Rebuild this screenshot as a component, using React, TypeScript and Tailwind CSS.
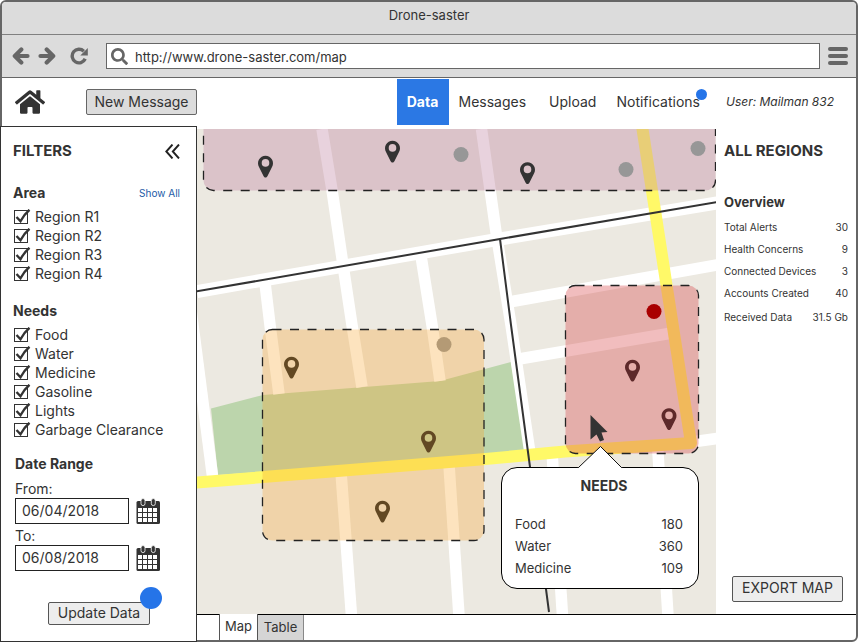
import type { ReactNode } from "react";
import { FaHome, FaSearch } from "react-icons/fa";

const AREAS = ["Region R1", "Region R2", "Region R3", "Region R4"];
const NEEDS = ["Food", "Water", "Medicine", "Gasoline", "Lights", "Garbage Clearance"];
const OVERVIEW = [
  ["Total Alerts", "30"],
  ["Health Concerns", "9"],
  ["Connected Devices", "3"],
  ["Accounts Created", "40"],
  ["Received Data", "31.5 Gb"],
];
const REGION_NEEDS = [
  ["Food", "180"],
  ["Water", "360"],
  ["Medicine", "109"],
];

function ArrowIcon({ className }: { className: string }) {
  return (
    <svg viewBox="0 0 18 18" className={className} fill="none" stroke="currentColor" strokeWidth="4.200">
      <path d="M9.300 2.500 L2.800 9 L9.300 15.500" strokeLinejoin="round" strokeLinecap="round" />
      <path d="M4 9 H15.500" strokeLinecap="round" />
    </svg>
  );
}

function ReloadIcon() {
  return (
    <svg viewBox="0 0 18 18" className="size-[18px]" fill="none" stroke="currentColor" strokeWidth="3.400">
      <path d="M13.800 4.200 A6.800 6.800 0 1 0 15.200 11.800" />
      <path d="M17.800 1 V8.500 H10.300Z" fill="currentColor" stroke="none" />
    </svg>
  );
}

function CheckRow({ label }: { label: string }) {
  return (
    <label className="flex h-[19px] items-center text-sm">
      <span className="relative mr-[5px] block h-[15px] w-4">
        <input
          type="checkbox"
          defaultChecked
          className="peer mt-px block size-3.5 appearance-none border border-[#333] bg-white"
        />
        <svg
          viewBox="0 0 17 15"
          className="pointer-events-none absolute top-0 left-0 hidden h-[15px] w-[17px] peer-checked:block"
          fill="none"
          stroke="#333"
          strokeWidth="2.400"
        >
          <path d="M2.500 8 L6.500 12.300 Q10 5.500 15.500 0.800" />
        </svg>
      </span>
      {label}
    </label>
  );
}

function CheckGroup({ items }: { items: string[] }) {
  return (
    <div className="mt-1">
      {items.map((item) => (
        <CheckRow key={item} label={item} />
      ))}
    </div>
  );
}

function CalendarIcon() {
  return (
    <svg viewBox="0 0 24 26" className="h-[26px] w-6">
      <rect x="0.500" y="3" width="23.500" height="23" rx="1.500" fill="#333" />
      <g stroke="#fff" strokeDasharray="4 1">
        <path d="M2 12 H22" strokeWidth="4" />
        <path d="M2 17 H22" strokeWidth="4" />
        <path d="M2 22 H22" strokeWidth="4" />
      </g>
      <g fill="#333" stroke="#fff" strokeWidth="0.800">
        <rect x="5" y="0.600" width="4" height="7" rx="2" />
        <rect x="15.300" y="0.600" width="4" height="7" rx="2" />
      </g>
    </svg>
  );
}

function DateField({ id, label, value }: { id: string; label: string; value: string }) {
  return (
    <div className="text-sm">
      <label htmlFor={id} className="block h-[21px] leading-[23px]">
        {label}
      </label>
      <div className="flex items-center gap-[7px]">
        <input
          id={id}
          defaultValue={value}
          className="h-[26px] w-[114px] border border-[#222] bg-white px-1.5 pb-0.5"
        />
        <button type="button" aria-label={`Pick date: ${label}`}>
          <CalendarIcon />
        </button>
      </div>
    </div>
  );
}

function Filters() {
  return (
    <aside className="relative -mb-0.5 -ml-0.5 w-[197px] shrink-0 border border-[#333] bg-white px-[13px]">
      <div className="mt-3.5 flex h-5 items-center justify-between pr-[3px]">
        <h2 className="-ml-px text-[15px] font-bold">FILTERS</h2>
        <button type="button" aria-label="Collapse filters">
          <svg viewBox="0 0 15 15" className="size-[15px]" fill="none" stroke="#222" strokeWidth="1.900">
            <path d="M7.500 0.500 L1.300 7.500 L7.500 14.500 M14 0.500 L7.800 7.500 L14 14.500" />
          </svg>
        </button>
      </div>

      <div className="mt-[22px] flex h-5 items-center justify-between pr-[3px]">
        <h3 className="-ml-px text-sm font-bold">Area</h3>
        <a href="#all" className="text-[10px] text-[#1d5ba6]">
          Show All
        </a>
      </div>
      <CheckGroup items={AREAS} />

      <h3 className="mt-[18px] -ml-px h-5 text-sm leading-5 font-bold">Needs</h3>
      <CheckGroup items={NEEDS} />

      <div className="pl-px">
        <h3 className="mt-[15px] h-5 text-sm leading-5 font-bold">Date Range</h3>
        <div className="mt-[3px]">
          <DateField id="from" label="From:" value="06/04/2018" />
          <DateField id="to" label="To:" value="06/08/2018" />
        </div>
      </div>

      <div className="relative mt-[29px] mb-4 ml-[34px] w-[102px]">
        <button
          type="button"
          className="h-[23px] w-full rounded-xs border border-[#555] bg-[#ededed] pb-1 text-sm leading-5"
        >
          Update Data
        </button>
        <span className="absolute -top-[13px] -right-3 size-[22px] rounded-full bg-[#2574e8]" />
      </div>
    </aside>
  );
}

function Pin({ x, y, fill = "#333" }: { x: number; y: number; fill?: string }) {
  return (
    <path
      transform={`translate(${x} ${y})`}
      fill={fill}
      fillRule="evenodd"
      d="M0 0 C-1 0 -1.700 -0.800 -2 -1.600 L-6.500 -10.500 A7.500 7.500 0 1 1 6.500 -10.500 L2 -1.600 C1.700 -0.800 1 0 0 0Z M0 -18.400 A3.800 3.800 0 1 0 0 -10.800 A3.800 3.800 0 1 0 0 -18.400Z"
    />
  );
}

function Region({ children, ...box }: {
  x: number;
  y: number;
  width: number;
  height: number;
  fill: string;
  fillOpacity: number;
  children?: ReactNode;
}) {
  return (
    <>
      {children}
      <rect {...box} rx="10" stroke="#222" strokeWidth="1.300" strokeDasharray="9 8.500" />
    </>
  );
}

function CityMap() {
  return (
    <svg
      viewBox="197 129 519 485"
      preserveAspectRatio="xMinYMin slice"
      className="absolute inset-0 h-full w-full"
      role="img"
      aria-label="Map of regions"
    >
      <rect x="197" y="129" width="519" height="486" fill="#ece9e1" />
      <path d="M211 408.500 L263 395 L440 381 L511 362 L526 453 L218 475Z" fill="#bcd5ac" />
      <g fill="none" stroke="#fff" strokeWidth="11.500">
        <path d="M197 291.500 L500 239 L717 203" strokeWidth="13" />
        <path d="M322 129 L332 190 L343 265 L352 325 L362 387" />
        <path d="M265 283 L270 325 L279 394" />
        <path d="M421 256 L432 325 L440 381" />
        <path d="M191 310 L213 480" />
        <path d="M481.500 129 L496 232 L511 325 L530 453" />
        <path d="M341 472 L351.500 616" />
        <path d="M449 465 L459 616" />
        <path d="M552 452 L562.500 616" />
        <path d="M657.500 445 L668 616" />
        <path d="M512 301.500 L717 265" />
        <path d="M519 359 L672 333" />
        <path d="M692 442 L717 438.500" />
      </g>
      <path
        d="M190 483 L480 459.500 L565 451.500 L691 443 L666.500 285 L642.500 129 L640 115"
        fill="none"
        stroke="#fff968"
        strokeWidth="12"
        strokeLinejoin="round"
      />
      <path
        d="M196 291.500 L500 239 L717 202 M500 239 L511 325 L530 467 L549 612"
        fill="none"
        stroke="#333"
        strokeWidth="2"
      />

      <Region x={203.500} y={117} width={512} height={73.500} fill="#b97697" fillOpacity={0.33} />
      <g fill="#979797">
        <circle cx="461" cy="154.500" r="7.500" />
        <circle cx="626" cy="169.500" r="7.500" />
        <circle cx="698" cy="148.500" r="7.500" />
      </g>
      <Pin x={265.500} y={177.500} />
      <Pin x={392.500} y={162.500} />
      <Pin x={527.500} y={184} />

      <Region x={262.500} y={329.500} width={221.500} height={211} fill="#faa328" fillOpacity={0.3}>
        <circle cx="444" cy="344.500" r="7.500" fill="#979797" />
        <Pin x={291.500} y={378.500} fill="#222" />
        <Pin x={428.500} y={452.500} fill="#222" />
        <Pin x={382.500} y={522.500} fill="#222" />
      </Region>

      <Region x={565.500} y={285.500} width={133} height={168} fill="#d64146" fillOpacity={0.35}>
        <Pin x={632.500} y={381.500} fill="#1c1c1c" />
        <Pin x={669} y={430} fill="#1c1c1c" />
      </Region>
      <circle cx="654" cy="311.500" r="7.500" fill="#a90000" />
      <path d="M590.500 415 L590.500 439.500 L596.500 434.500 L600 441.500 L604 440 L601.500 432.500 L607.500 432Z" fill="#333" />
    </svg>
  );
}

function NeedsPopup() {
  return (
    <div className="absolute top-[338px] left-[304px] w-[198px] rounded-2xl border border-black bg-white px-[13px] pt-2 pb-[9px]">
      <svg viewBox="0 0 46 24" className="absolute -top-[23px] left-[75px] h-6 w-[46px]">
        <path d="M1 23 L23.500 1.500 L45 23 V24 H1Z" fill="#fff" />
        <path d="M0 22.500 H1.500 L23.500 1.500 L44.500 22.500 H46" fill="none" stroke="#111" />
      </svg>
      <h3 className="h-5 pl-2 text-center text-sm leading-5 font-bold">NEEDS</h3>
      <table className="mt-[17px] w-full text-[13px]">
        <tbody>
          {REGION_NEEDS.map(([name, count]) => (
            <tr key={name} className="h-[22px]">
              <th scope="row" className="p-0 text-left leading-5 font-normal">
                {name}
              </th>
              <td className="p-0 pr-0.5 text-right leading-5">{count}</td>
            </tr>
          ))}
        </tbody>
      </table>
    </div>
  );
}

function Overview() {
  return (
    <aside className="flex w-[140px] shrink-0 flex-col pl-2">
      <h2 className="mt-3 h-5 text-[15px] leading-5 font-bold whitespace-nowrap">ALL REGIONS</h2>
      <h3 className="mt-[31px] h-5 text-[13px] leading-5 font-bold">Overview</h3>
      <dl className="mt-1 pr-2 text-[10px] whitespace-nowrap">
        {OVERVIEW.map(([name, value]) => (
          <div key={name} className="flex h-[22px] items-center justify-between last:h-[26px]">
            <dt>{name}</dt>
            <dd>{value}</dd>
          </div>
        ))}
      </dl>
      <button
        type="button"
        className="mt-auto mb-3 ml-2 h-[26px] w-[111px] rounded-xs border border-[#555] bg-[#ededed] pb-0.5 text-sm whitespace-nowrap"
      >
        EXPORT MAP
      </button>
    </aside>
  );
}

export default function App() {
  return (
    <div
      className="flex min-h-screen flex-col rounded-md border-2 border-[#666] bg-white text-[#333]"
      style={{ fontFamily: 'Inter, "Liberation Sans", sans-serif' }}
    >
      <div className="h-[33px] rounded-t-sm border-b border-[#808080] bg-[#dcdcdc] pt-[3px] text-center text-[13px] leading-5">
        Drone-saster
      </div>
      <div className="flex h-[43px] items-center border-b border-[#666] bg-[#dcdcdc] pr-2 pl-2.5 text-[#666]">
        <button type="button" aria-label="Back">
          <ArrowIcon className="size-[18px]" />
        </button>
        <button type="button" aria-label="Forward" className="ml-2">
          <ArrowIcon className="size-[18px] rotate-180" />
        </button>
        <button type="button" aria-label="Reload" className="ml-3.5">
          <ReloadIcon />
        </button>
        <div className="ml-[18px] flex h-[26px] flex-1 items-center border border-[#666] bg-white pl-1">
          <FaSearch className="size-[17px]" />
          <input
            aria-label="Address"
            defaultValue="http://www.drone-saster.com/map"
            className="ml-[7px] h-full flex-1 bg-transparent pt-px text-[13px] text-[#333]"
          />
        </div>
        <button type="button" aria-label="Menu" className="ml-2 flex w-5 flex-col gap-[3px]">
          <span className="h-1 rounded-full bg-[#666]" />
          <span className="h-1 rounded-full bg-[#666]" />
          <span className="h-1 rounded-full bg-[#666]" />
        </button>
      </div>

      <header className="flex h-12 items-center pr-[22px] pl-[13px]">
        <a href="#home" aria-label="Home">
          <FaHome className="size-[30px]" />
        </a>
        <button
          type="button"
          className="ml-[41px] h-[26px] w-[111px] rounded-xs border border-[#666] bg-[#dcdcdc] text-sm whitespace-nowrap"
        >
          New Message
        </button>
        <nav className="ml-auto flex items-center text-sm">
          <a href="#data" className="flex h-[46px] w-[52px] items-center justify-center bg-[#2b78e4] font-bold text-white">
            Data
          </a>
          <a href="#messages" className="ml-2.5">
            Messages
          </a>
          <a href="#upload" className="ml-[23px]">
            Upload
          </a>
          <a href="#notifications" className="relative ml-5">
            Notifications
            <span className="absolute -top-[3px] -right-[7px] size-[11px] rounded-full bg-[#2574e8]" />
          </a>
        </nav>
        <span className="ml-[26px] text-xs whitespace-nowrap italic">User: Mailman 832</span>
      </header>

      <div className="flex flex-1">
        <Filters />
        <div className="flex min-w-0 flex-1 flex-col pt-[3px]">
          <div className="flex flex-1">
            <main className="relative min-w-0 flex-1 overflow-hidden">
              <CityMap />
              <NeedsPopup />
            </main>
            <Overview />
          </div>
          <div className="flex h-[26px] border-t border-black pl-[22px] text-[13px]">
            <button type="button" className="-mt-px w-[39px] border-x border-[#555] bg-white">
              Map
            </button>
            <button type="button" className="w-[46px] border-r border-[#888] bg-[#d5d5d5]">
              Table
            </button>
          </div>
        </div>
      </div>
    </div>
  );
}
